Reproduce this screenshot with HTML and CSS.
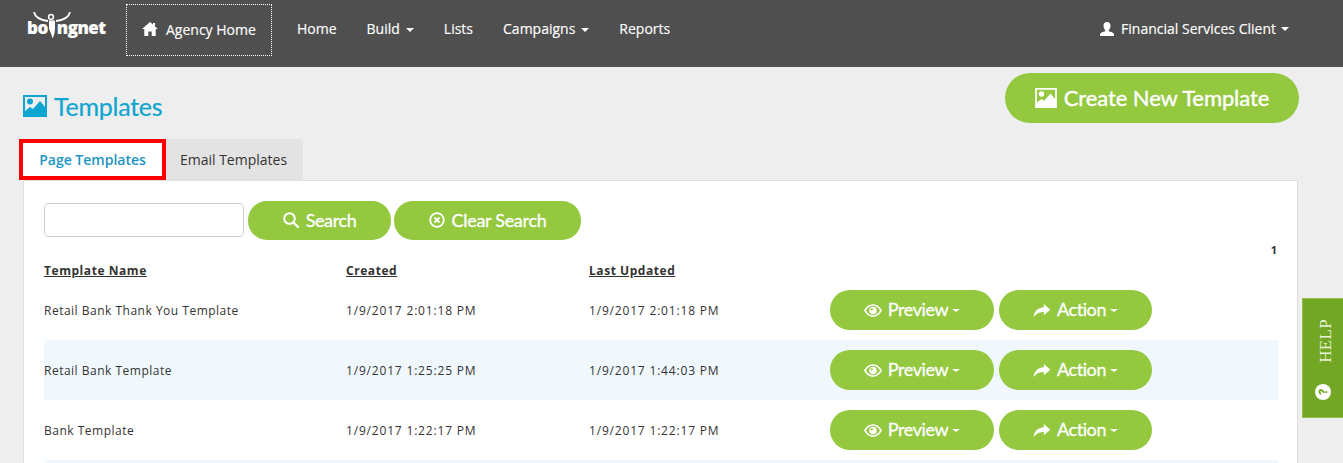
FILE: index.html
```html
<!DOCTYPE html>
<html lang="en">
<head>
<meta charset="utf-8">
<title>Templates</title>
<link rel="stylesheet" href="styles.css">
</head>
<body>
<svg class="sprites" width="0" height="0" aria-hidden="true">
  <symbol id="i-picture" viewBox="0 0 24 22"><path fill-rule="evenodd" d="M0 0h24v22H0zM2 2v14l5-4 3 2 7-8 5 6V2zM7 3.500a3 3 0 1 1 0 6 3 3 0 0 1 0-6z"/></symbol>
  <symbol id="i-eye" viewBox="0 0 20 14"><path fill-rule="evenodd" d="M10 0c4.500 0 8 3.200 10 7-2 3.800-5.500 7-10 7S2 10.800 0 7c2-3.800 5.500-7 10-7zM10 1.700C6.800 1.700 4 3.800 2.200 7 4 10.200 6.800 12.300 10 12.300s6-2.100 7.800-5.300C16 3.800 13.200 1.700 10 1.700zM10 2.800a4.200 4.200 0 1 1 0 8.400 4.200 4.200 0 0 1 0-8.400zM8.600 4.500a1.300 1.300 0 1 0 0 2.600 1.300 1.300 0 0 0 0-2.600z"/></symbol>
  <symbol id="i-share" viewBox="0 0 18 14"><path d="M11 0l7 6.200-7 6V8.600C6.500 8.600 3 10 0 14c.6-5.500 4-10 11-10.400z"/></symbol>
</svg>

<header class="topbar">
  <a class="logo">
    <svg class="logo-arcs" viewBox="0 0 38 14" aria-hidden="true"><path d="M1 0c1 5 6 8 14 9M37 0c-1 5-6 8-14 9" fill="none" stroke="#fff" stroke-width="1.800"/><circle cx="18" cy="5" r="2.400" fill="none" stroke="#fff" stroke-width="1.500"/></svg>
    <span class="logo-text">bo<svg class="logo-i" viewBox="0 0 8 24" aria-hidden="true"><path d="M0 0h8v9c0 6-1 10-3 15C3 19 2 15 0 11z" fill="#fff"/></svg>ngnet</span>
  </a>
  <a class="agency">
    <svg class="home-icon" viewBox="0 0 16 14" aria-hidden="true"><path fill="#fff" d="M8 0l3 2.600V1h2v3.400L16 7h-2.300v7H9.700V9.500H6.300V14H2.300V7H0z"/></svg>
    Agency Home
  </a>
  <nav class="nav">
    <a class="nav-link">Home</a>
    <a class="nav-link">Build<i class="caret"></i></a>
    <a class="nav-link">Lists</a>
    <a class="nav-link">Campaigns<i class="caret"></i></a>
    <a class="nav-link">Reports</a>
  </nav>
  <a class="user">
    <svg class="user-icon" viewBox="0 0 14 14" aria-hidden="true"><path fill="#fff" d="M7 0c2.300 0 3.500 1.600 3.500 3.800 0 1.800-.8 3.500-1.700 4.400v1.100c2 .7 5.200 1.400 5.200 3.100V14H0v-1.600c0-1.700 3.200-2.400 5.200-3.100V8.200C4.300 7.300 3.500 5.600 3.500 3.800 3.500 1.600 4.700 0 7 0z"/></svg>
    Financial Services Client<i class="caret"></i>
  </a>
</header>

<main class="page">
  <div class="title-row">
    <h1 class="title"><svg class="title-icon"><use href="#i-picture"/></svg>Templates</h1>
    <a class="btn btn-create"><svg class="create-icon"><use href="#i-picture"/></svg>Create New Template</a>
  </div>

  <div class="tabs">
    <a class="tab tab-active">Page Templates</a>
    <a class="tab">Email Templates</a>
  </div>

  <section class="panel">
    <div class="search-row">
      <input class="search-input" type="text" aria-label="Search">
      <a class="btn btn-search">
        <svg class="btn-icon" viewBox="0 0 16 16" aria-hidden="true"><circle cx="6.500" cy="6.500" r="5.300" fill="none" stroke="#fff" stroke-width="2"/><path d="M10.500 10.500L15 15" stroke="#fff" stroke-width="2.400" stroke-linecap="round"/></svg>
        Search
      </a>
      <a class="btn btn-clear">
        <svg class="btn-icon" viewBox="0 0 16 16" aria-hidden="true"><circle cx="8" cy="8" r="6.800" fill="none" stroke="#fff" stroke-width="1.800"/><path d="M5.500 5.500l5 5M10.500 5.500l-5 5" stroke="#fff" stroke-width="1.800"/></svg>
        Clear Search
      </a>
    </div>
    <div class="pager">1</div>
    <div class="row row-head">
      <span class="col-head">Template Name</span>
      <span class="col-head">Created</span>
      <span class="col-head">Last Updated</span>
    </div>
    <div class="row">
      <span class="cell-name">Retail Bank Thank You Template</span>
      <span class="cell-date">1/9/2017 2:01:18 PM</span>
      <span class="cell-date">1/9/2017 2:01:18 PM</span>
      <div class="actions">
        <a class="btn btn-row btn-preview"><svg class="eye-icon"><use href="#i-eye"/></svg>Preview<i class="caret caret-sm"></i></a>
        <a class="btn btn-row btn-action"><svg class="share-icon"><use href="#i-share"/></svg>Action<i class="caret caret-sm"></i></a>
      </div>
    </div>
    <div class="row row-alt">
      <span class="cell-name">Retail Bank Template</span>
      <span class="cell-date">1/9/2017 1:25:25 PM</span>
      <span class="cell-date">1/9/2017 1:44:03 PM</span>
      <div class="actions">
        <a class="btn btn-row btn-preview"><svg class="eye-icon"><use href="#i-eye"/></svg>Preview<i class="caret caret-sm"></i></a>
        <a class="btn btn-row btn-action"><svg class="share-icon"><use href="#i-share"/></svg>Action<i class="caret caret-sm"></i></a>
      </div>
    </div>
    <div class="row">
      <span class="cell-name">Bank Template</span>
      <span class="cell-date">1/9/2017 1:22:17 PM</span>
      <span class="cell-date">1/9/2017 1:22:17 PM</span>
      <div class="actions">
        <a class="btn btn-row btn-preview"><svg class="eye-icon"><use href="#i-eye"/></svg>Preview<i class="caret caret-sm"></i></a>
        <a class="btn btn-row btn-action"><svg class="share-icon"><use href="#i-share"/></svg>Action<i class="caret caret-sm"></i></a>
      </div>
    </div>
    <div class="row row-alt"></div>
  </section>
</main>

<aside class="help">
  <span class="help-text">HELP</span>
  <svg class="help-icon" viewBox="0 0 16 16" aria-hidden="true"><circle cx="8" cy="8" r="8" fill="#fff"/><path d="M5.300 6.200C5.500 4.500 6.700 3.600 8.200 3.600c1.600 0 2.700 1 2.700 2.300 0 1.200-.8 1.800-1.500 2.300-.5.400-.7.700-.7 1.300H7.100c0-1.100.3-1.700 1-2.300.5-.4 1-.7 1-1.200 0-.5-.4-.8-.9-.8-.6 0-1 .4-1.100 1zM7.100 10.400h1.700v1.900H7.100z" fill="#72a625"/></svg>
</aside>
```
FILE: styles.css
```css
* { box-sizing: border-box; }
html, body { margin: 0; height: 463px; overflow: hidden; }
body { background: #eee; font-family: "Open Sans", sans-serif; font-size: 13px; color: #333; position: relative; }
.sprites { position: absolute; }
a { text-decoration: none; }

.topbar { height: 67px; background: #4f4f4f; display: flex; align-items: flex-start; color: #fff; padding: 0 54px 0 28px; font-size: 14px; -webkit-text-stroke: .15px #fff; }
.logo { width: 98px; height: 44px; position: relative; flex: none; }
.logo-arcs { position: absolute; left: 5px; top: 12px; width: 38px; height: 14px; }
.logo-text { position: absolute; left: -1px; top: 17px; font-family: "Open Sans", sans-serif; font-weight: 800; font-size: 17px; line-height: 21px; letter-spacing: -.5px; color: #fff; display: flex; }
.logo-i { width: 6px; height: 25px; margin: 0 2px 0 1px; }
.agency { width: 146px; height: 52px; margin-top: 4px; border: 1px dotted #fff; display: flex; align-items: center; padding: 0 0 2px 15px; color: #fff; flex: none; }
.home-icon { width: 16px; height: 14px; margin-right: 8px; }
.nav { display: flex; margin-left: 25px; padding-top: 19px; line-height: 20px; }
.nav-link { color: #fff; margin-right: 30px; white-space: nowrap; }
.caret { display: inline-block; width: 0; height: 0; margin-left: 6px; vertical-align: middle; border-top: 4px solid #fff; border-left: 4px solid transparent; border-right: 4px solid transparent; }
.caret-sm { margin: 3px 0 0 4px; border-top-width: 3px; }
.user { margin-left: auto; padding-top: 19px; line-height: 20px; display: flex; align-items: center; color: #fff; white-space: nowrap; }
.user-icon { width: 14px; height: 14px; margin-right: 7px; }
.user .caret { margin-left: 5px; }

.title-row { height: 72px; display: flex; justify-content: space-between; padding: 6px 44px 0 23px; }
.title { margin: 15px 0 0; height: 36px; font-family: Lato, sans-serif; font-weight: 400; font-size: 25px; line-height: 36px; letter-spacing: -.25px; color: #0ea5d0; display: flex; align-items: center; -webkit-text-stroke: .2px #0ea5d0; }
.title-icon { width: 24px; height: 22px; fill: #0ea5d0; margin-right: 7px; }
.btn { background: #93c83f; color: #fff; font-family: Lato, sans-serif; display: inline-flex; align-items: center; justify-content: center; white-space: nowrap; }
.btn-create { width: 294px; height: 50px; border-radius: 25px; font-size: 22px; letter-spacing: -.1px; padding-bottom: 2px; -webkit-text-stroke: .4px #fff; }
.create-icon { width: 22px; height: 20px; fill: #fff; margin: 2px 7px 0 0; }

.tabs { display: flex; height: 42px; padding-left: 19px; position: relative; z-index: 1; }
.tab { height: 42px; padding: 11px 2px 0 0; text-align: center; font-size: 14px; line-height: 20px; color: #333; background: #e3e3e3; width: 137px; border-radius: 0 4px 0 0; }
.tab-active { width: 147px; height: 41px; padding: 7px 0 0; background: #fff; color: #1c94c4; font-weight: 600; border: 4px solid #f00; border-radius: 0; }

.panel { margin: -1px 45px 0 23px; height: 284px; overflow: hidden; background: #fff; border: 1px solid #ddd; padding: 20px 19px 0 20px; }
.search-row { display: flex; align-items: center; height: 39px; }
.search-input { width: 200px; height: 34px; border: 1px solid #ccc; border-radius: 5px; background: #fff; margin: 0 4px 2px 0; }
.btn-search, .btn-clear { height: 39px; border-radius: 19px; font-size: 18px; padding-bottom: 2px; -webkit-text-stroke: .3px #fff; }
.btn-search { width: 143px; margin-right: 3px; letter-spacing: -.4px; }
.btn-clear { width: 187px; letter-spacing: -.3px; }
.btn-icon { width: 16px; height: 16px; margin-right: 7px; }
.pager { text-align: right; font-size: 11px; font-weight: 700; line-height: 14px; height: 14px; margin-top: 3px; padding-right: 1px; }

.row { display: grid; grid-template-columns: 302px 243px 241px 1fr; align-items: center; height: 60px; font-size: 12px; color: #333; }
.row-head { height: 26px; margin-top: -3px; padding-bottom: 1px; align-items: end; }
.col-head { font-weight: 700; text-decoration: underline; letter-spacing: .55px; line-height: 17px; }
.cell-name { letter-spacing: .5px; }
.cell-date { letter-spacing: .82px; }
.row-alt { background: #f0f8fe; }
.actions { display: flex; gap: 5px; }
.btn-row { height: 40px; border-radius: 20px; font-size: 18px; letter-spacing: -.4px; padding-bottom: 2px; -webkit-text-stroke: .3px #fff; }
.btn-preview { width: 164px; }
.btn-action { width: 153px; }
.eye-icon { width: 18px; height: 13px; fill: #fff; margin: 2px 6px 0 0; }
.share-icon { width: 18px; height: 13px; fill: #fff; margin: 2px 6px 0 0; }

.help { position: absolute; left: 1302px; top: 298px; width: 41px; height: 120px; background: #72a625; border: 1px solid #8fbf4a; border-right: 0; display: flex; flex-direction: column; align-items: center; padding-top: 20px; color: #e9f3d8; }
.help-text { font-family: "Liberation Serif", serif; font-size: 17px; line-height: 20px; writing-mode: vertical-rl; transform: rotate(180deg); margin-left: 6px; letter-spacing: .3px; }
.help-icon { width: 16px; height: 16px; margin-top: 21px; transform: rotate(-90deg); }
```
